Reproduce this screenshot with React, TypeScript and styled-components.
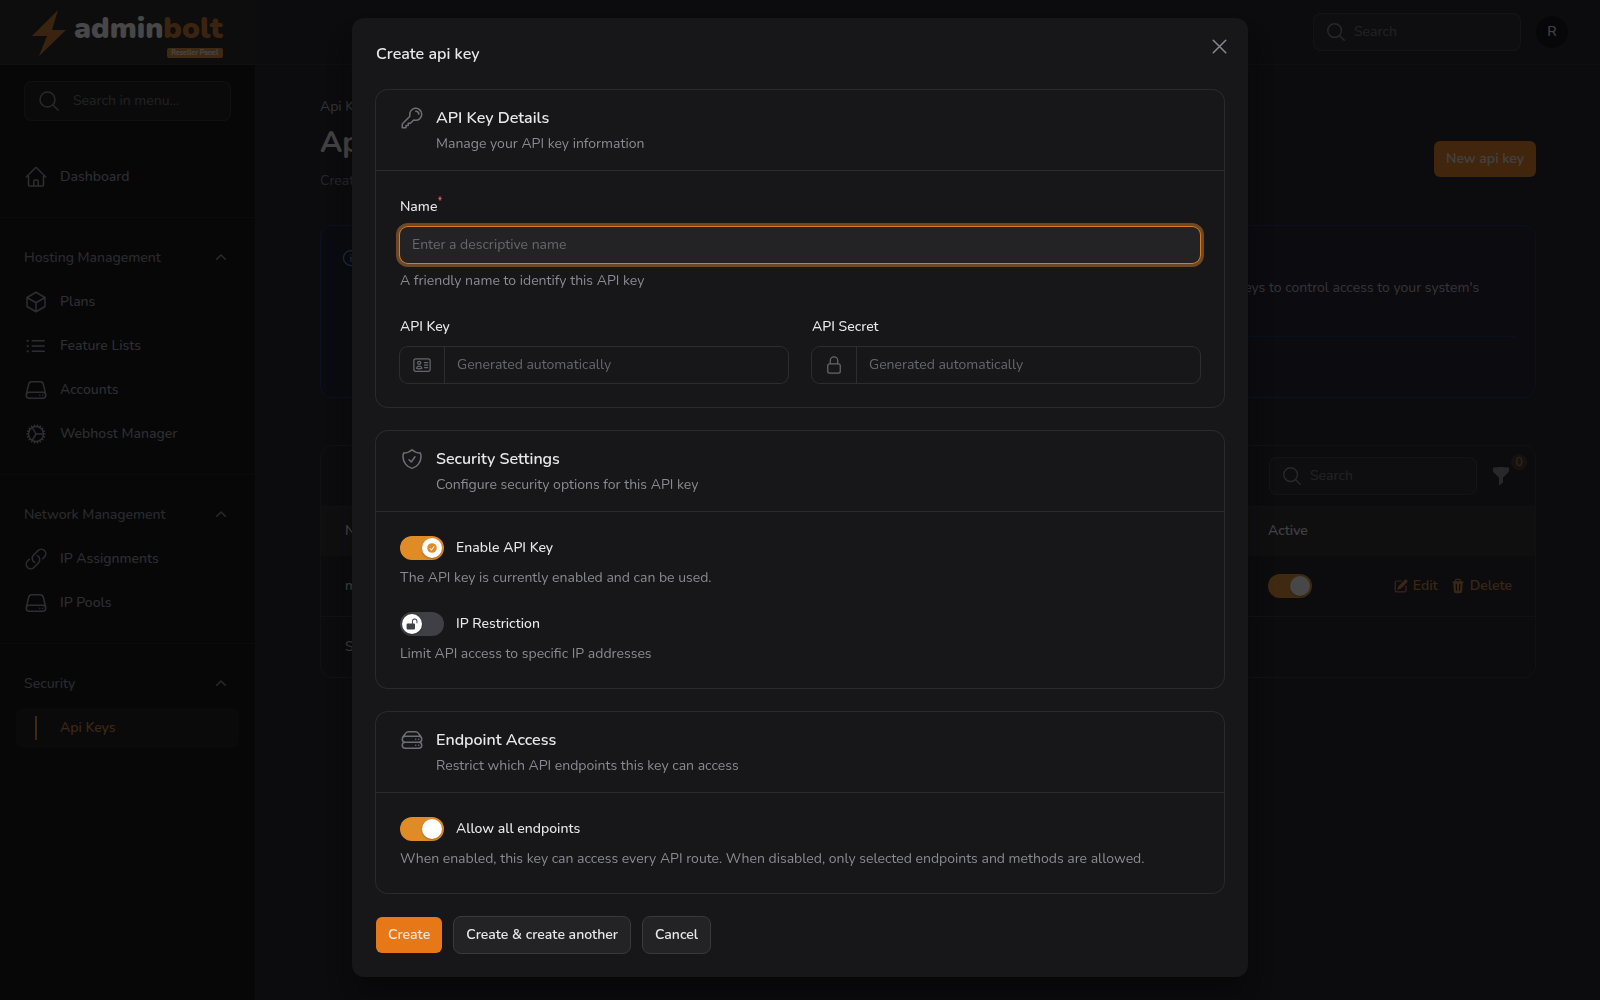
import React from "react";
import styled, { createGlobalStyle, css } from "styled-components";
import type { IconType } from "react-icons";
import {
  HiMiniCheckCircle,
  HiMiniChevronUp,
  HiMiniFunnel,
  HiMiniLockOpen,
  HiMiniPencilSquare,
  HiMiniTrash,
  HiOutlineCog,
  HiOutlineCube,
  HiOutlineHome,
  HiOutlineIdentification,
  HiOutlineInformationCircle,
  HiOutlineKey,
  HiOutlineLink,
  HiOutlineListBullet,
  HiOutlineLockClosed,
  HiOutlineMagnifyingGlass,
  HiOutlineServer,
  HiOutlineServerStack,
  HiOutlineShieldCheck,
  HiOutlineXMark,
} from "react-icons/hi2";

const line = "rgba(255, 255, 255, 0.1)";
const faintLine = "rgba(255, 255, 255, 0.06)";
const orange = "#e67817";
const amber = "#df8c27";
const bright = "#e8e8ea";

const GlobalStyle = createGlobalStyle`
  *, *::before, *::after { box-sizing: border-box; }
  body {
    margin: 0;
    background: #141419;
    color: ${bright};
    font-family: Nunito, Lato, sans-serif;
    font-size: 14px;
    line-height: 20px;
    -webkit-font-smoothing: antialiased;
  }
  h1, h2, h3, p, ul { margin: 0; padding: 0; }
  ul { list-style: none; }
  button, input { font: inherit; color: inherit; }
  a { text-decoration: none; }
  svg { flex: none; display: block; }
`;

/* ---------- shell ---------- */

const Shell = styled.div`
  display: grid;
  grid-template-columns: 256px 1fr;
  min-height: 100vh;
`;

const Sidebar = styled.aside`
  background: #020203;
  border-right: 1px solid ${line};
`;

const Brand = styled.a`
  display: flex;
  align-items: flex-start;
  gap: 7px;
  height: 65px;
  padding: 10px 31px 0;
  background: #1a1a1a;
  border-bottom: 1px solid ${faintLine};
  color: #fff;
`;

const BrandText = styled.span`
  display: flex;
  flex-direction: column;
  align-items: flex-end;
`;

const Wordmark = styled.span`
  font-size: 30px;
  font-weight: 900;
  line-height: 38px;
  em {
    font-style: normal;
    color: #c9761e;
  }
`;

const PanelTag = styled.span`
  width: 56px;
  border-radius: 2px;
  background: #d98632;
  color: #fff;
  font-size: 7px;
  font-weight: 700;
  line-height: 10px;
  text-align: center;
`;

const SearchBox = styled.label<{ $wide?: boolean }>`
  display: flex;
  align-items: center;
  gap: ${(p) => (p.$wide ? 12 : 7)}px;
  width: ${(p) => (p.$wide ? "auto" : "208px")};
  height: ${(p) => (p.$wide ? 40 : 38)}px;
  padding: 0 ${(p) => (p.$wide ? 12 : 11)}px;
  border: 1px solid ${line};
  border-radius: 8px;
  background: rgba(255, 255, 255, 0.05);
  color: #85858f;
  input {
    flex: 1;
    min-width: 0;
    padding: 0;
    border: 0;
    outline: 0;
    background: none;
    &::placeholder {
      color: #6b6b75;
      opacity: 1;
    }
  }
`;

const SidebarSearch = styled.div`
  padding: 16px 24px 36px;
`;

const NavGroup = styled.section`
  padding-bottom: 20px;
  & + & {
    padding-top: 20px;
    border-top: 1px solid ${faintLine};
  }
`;

const GroupToggle = styled.button`
  display: flex;
  align-items: center;
  justify-content: space-between;
  width: 100%;
  height: 40px;
  padding: 0 24px;
  border: 0;
  background: none;
  color: #8d8d97;
  font-weight: 500;
`;

const NavList = styled.ul`
  display: grid;
  gap: 4px;
  padding: 0 16px;
  ${GroupToggle} + & {
    margin-top: 4px;
  }
`;

const NavLink = styled.a<{ $active?: boolean }>`
  display: flex;
  align-items: center;
  gap: 12px;
  height: 40px;
  padding: 0 8px;
  border-radius: 8px;
  background: ${(p) => (p.$active ? "rgba(255,255,255,0.05)" : "none")};
  color: ${(p) => (p.$active ? "#d98632" : "#9a9aa4")};
  font-weight: 500;
`;

const ActiveMark = styled.span`
  width: 2px;
  height: 24px;
  margin: 0 11px;
  background: currentColor;
`;

/* ---------- page behind the dialog ---------- */

const Topbar = styled.header`
  display: flex;
  align-items: center;
  justify-content: flex-end;
  gap: 15px;
  height: 65px;
  padding: 0 32px;
  border-bottom: 1px solid ${faintLine};
`;

const Avatar = styled.button`
  width: 32px;
  height: 32px;
  padding: 0;
  border: 0;
  border-radius: 50%;
  background: #030305;
  font-weight: 500;
`;

const Page = styled.main`
  padding: 32px 64px;
`;

const PageHeader = styled.div`
  display: flex;
  align-items: center;
  justify-content: space-between;
  margin-bottom: 32px;
`;

const Crumb = styled.nav`
  margin-bottom: 8px;
  color: #b5b5bd;
  a {
    color: inherit;
  }
`;

const PageTitle = styled.h1`
  font-size: 30px;
  font-weight: 700;
  line-height: 36px;
`;

const PageLead = styled.p`
  margin-top: 8px;
  color: #7c7c86;
  line-height: 24px;
`;

const Button = styled.button<{ $primary?: boolean }>`
  height: ${(p) => (p.$primary ? 36 : 38)}px;
  padding: 0 12px;
  border-radius: 6px;
  font-weight: 600;
  ${(p) =>
    p.$primary
      ? css`
          border: 0;
          background: ${orange};
        `
      : css`
          border: 1px solid #3a3a3d;
          background: #232325;
          border-radius: 8px;
        `}
`;

const HeaderAction = styled.div`
  margin-top: 28px;
`;

const Notice = styled.section`
  display: flex;
  gap: 12px;
  padding: 20px;
  border: 1px solid #182468;
  border-radius: 12px;
  background: linear-gradient(90deg, #0c1220, #17111e);
`;

const NoticeIcon = styled.span`
  display: flex;
  height: 24px;
  align-items: center;
  color: #4b95e6;
`;

const NoticeBody = styled.div`
  flex: 1;
`;

const NoticeTitle = styled.h2`
  font-size: 16px;
  line-height: 24px;
`;

const NoticeText = styled.p`
  margin-top: 8px;
  padding-right: 32px;
  min-height: 40px;
  color: #b5b5bd;
`;

const NoticeLinks = styled.div`
  margin-top: 18px;
  padding-top: 16px;
  border-top: 1px solid #13205a;
  line-height: 24px;
  a {
    color: #3b82d6;
  }
`;

const TableCard = styled.section`
  margin-top: 47px;
  border: 1px solid ${line};
  border-radius: 12px;
  overflow: hidden;
`;

const Toolbar = styled.div`
  display: flex;
  align-items: center;
  justify-content: flex-end;
  gap: 12px;
  height: 60px;
  padding: 0 22px 0 24px;
`;

const FilterButton = styled.button`
  position: relative;
  display: grid;
  place-items: center;
  width: 24px;
  height: 36px;
  padding: 0;
  border: 0;
  background: none;
  color: #84848d;
`;

const FilterCount = styled.span`
  position: absolute;
  top: -4px;
  right: -14px;
  width: 16px;
  height: 16px;
  border-radius: 50%;
  background: #3c2c1a;
  color: #c09038;
  font-size: 12px;
  line-height: 16px;
`;

const Table = styled.table`
  width: 100%;
  border-collapse: collapse;
  table-layout: fixed;
  th {
    height: 49px;
    background: #212123;
    border-top: 1px solid ${line};
    font-weight: 500;
    text-align: left;
  }
  td {
    height: 61px;
    border-bottom: 1px solid ${line};
  }
  th,
  td {
    padding: 0 12px;
  }
  th:first-child,
  td:first-child {
    padding-left: 24px;
  }
  th:nth-child(4) {
    width: 126px;
  }
  th:last-child {
    width: 153px;
  }
`;

const RowActions = styled.div`
  display: flex;
  justify-content: flex-end;
  gap: 12px;
  margin-right: 11px;
`;

const RowAction = styled.button`
  display: flex;
  align-items: center;
  gap: 4px;
  padding: 0;
  border: 0;
  background: none;
  color: #c87d35;
  font-weight: 600;
`;

const TableFooter = styled.p`
  padding: 20px 24px;
  color: #c8c8ce;
  font-weight: 500;
`;

/* ---------- switch ---------- */

const SwitchTrack = styled.span`
  display: inline-grid;
  flex: none;
  width: 44px;
  height: 24px;
  vertical-align: middle;
  > * {
    grid-area: 1 / 1;
  }
`;

const SwitchInput = styled.input`
  appearance: none;
  width: 44px;
  height: 24px;
  margin: 0;
  border-radius: 12px;
  background: #3f3f46;
  &:checked {
    background: ${amber};
  }
`;

const Thumb = styled.span<{ $on: boolean }>`
  display: grid;
  place-items: center;
  align-self: center;
  justify-self: ${(p) => (p.$on ? "end" : "start")};
  width: 20px;
  height: 20px;
  margin: 0 2px;
  border-radius: 50%;
  background: #fff;
  box-shadow: 0 1px 2px rgba(0, 0, 0, 0.25);
  color: ${(p) => (p.$on ? amber : "#3f3f46")};
  pointer-events: none;
`;

type SwitchProps = { on: boolean; icon?: IconType; id?: string; label?: string };

function Switch({ on, icon: Icon, id, label }: SwitchProps) {
  const [checked, setChecked] = React.useState(on);
  return (
    <SwitchTrack>
      <SwitchInput
        type="checkbox"
        role="switch"
        id={id}
        aria-label={label}
        checked={checked}
        onChange={() => setChecked(!checked)}
      />
      <Thumb $on={checked}>{Icon && <Icon size={12} />}</Thumb>
    </SwitchTrack>
  );
}

/* ---------- dialog ---------- */

const Overlay = styled.div`
  position: fixed;
  inset: 0;
  padding: 18px 16px;
  overflow: auto;
  background: rgba(9, 9, 11, 0.75);
`;

const Dialog = styled.form`
  position: relative;
  display: grid;
  gap: 24px;
  max-width: 896px;
  margin: 0 auto;
  padding: 24px;
  border-radius: 12px;
  background: #171719;
  box-shadow: 0 20px 25px rgba(0, 0, 0, 0.3);
`;

const DialogTitle = styled.h2`
  font-size: 16px;
  font-weight: 600;
  line-height: 24px;
`;

const CloseButton = styled.button`
  position: absolute;
  top: 16px;
  right: 16px;
  padding: 0;
  border: 0;
  background: none;
  color: #85858f;
`;

const Section = styled.section`
  border-radius: 12px;
  box-shadow: 0 0 0 1px #2a2a2d;
`;

const SectionHeader = styled.header`
  display: flex;
  gap: 12px;
  padding: 16px 24px;
  color: #6e6e77;
`;

const SectionTitle = styled.h3`
  color: ${bright};
  font-size: 16px;
  font-weight: 600;
  line-height: 24px;
`;

const Hint = styled.p`
  color: #8a8a93;
`;

const SectionHint = styled(Hint)`
  margin-top: 4px;
`;

const SectionBody = styled.div`
  display: grid;
  gap: 24px;
  padding: 24px;
  border-top: 1px solid #2a2a2d;
`;

const Field = styled.div`
  display: grid;
  gap: 8px;
`;

const FieldLabel = styled.label`
  font-weight: 500;
  line-height: 24px;
  sup {
    color: #f26464;
    font-size: 11px;
    line-height: 0;
  }
`;

const InputShell = styled.div<{ $focused?: boolean }>`
  display: flex;
  height: 36px;
  border-radius: 8px;
  box-shadow: ${(p) =>
    p.$focused ? "0 0 0 1px #d67a20, 0 0 0 4px #6d4822" : "0 0 0 1px #2d2d30"};
  background: ${(p) => (p.$focused ? "#232325" : "none")};
  input {
    flex: 1;
    min-width: 0;
    padding: 0 12px;
    border: 0;
    outline: 0;
    background: none;
    &::placeholder {
      color: #66666f;
      opacity: 1;
    }
  }
`;

const Affix = styled.span`
  display: grid;
  place-items: center;
  width: 45px;
  border-right: 1px solid #2d2d30;
  color: #66666f;
`;

const TwoColumns = styled.div`
  display: grid;
  grid-template-columns: 1fr 1fr;
  gap: 24px;
`;

const SwitchRow = styled.div`
  display: flex;
  align-items: center;
  gap: 12px;
  height: 24px;
`;

const SwitchLabel = styled.label`
  font-weight: 500;
`;

const DialogFooter = styled.footer`
  display: flex;
  align-items: center;
  gap: 11px;
  margin: -1px 0;
`;

/* ---------- composed parts ---------- */

type NavItem = { label: string; icon?: IconType; active?: boolean };

const groups: { title?: string; items: NavItem[] }[] = [
  { items: [{ label: "Dashboard", icon: HiOutlineHome }] },
  {
    title: "Hosting Management",
    items: [
      { label: "Plans", icon: HiOutlineCube },
      { label: "Feature Lists", icon: HiOutlineListBullet },
      { label: "Accounts", icon: HiOutlineServer },
      { label: "Webhost Manager", icon: HiOutlineCog },
    ],
  },
  {
    title: "Network Management",
    items: [
      { label: "IP Assignments", icon: HiOutlineLink },
      { label: "IP Pools", icon: HiOutlineServer },
    ],
  },
  { title: "Security", items: [{ label: "Api Keys", active: true }] },
];

function PanelSection(props: {
  icon: IconType;
  title: string;
  hint: string;
  children: React.ReactNode;
}) {
  const Icon = props.icon;
  return (
    <Section>
      <SectionHeader>
        <Icon size={24} />
        <div>
          <SectionTitle>{props.title}</SectionTitle>
          <SectionHint>{props.hint}</SectionHint>
        </div>
      </SectionHeader>
      <SectionBody>{props.children}</SectionBody>
    </Section>
  );
}

function GeneratedField(props: { id: string; label: string; icon: IconType }) {
  const Icon = props.icon;
  return (
    <Field>
      <FieldLabel htmlFor={props.id}>{props.label}</FieldLabel>
      <InputShell>
        <Affix>
          <Icon size={20} />
        </Affix>
        <input id={props.id} placeholder="Generated automatically" readOnly />
      </InputShell>
    </Field>
  );
}

function ToggleField(props: {
  id: string;
  label: string;
  hint: string;
  on: boolean;
  icon?: IconType;
}) {
  return (
    <Field>
      <SwitchRow>
        <Switch id={props.id} on={props.on} icon={props.icon} />
        <SwitchLabel htmlFor={props.id}>{props.label}</SwitchLabel>
      </SwitchRow>
      <Hint>{props.hint}</Hint>
    </Field>
  );
}

function Search({ label }: { label: string }) {
  return (
    <SearchBox>
      <HiOutlineMagnifyingGlass size={22} />
      <input placeholder="Search" aria-label={label} />
    </SearchBox>
  );
}

export default function App() {
  return (
    <>
      <GlobalStyle />
      <Shell>
        <Sidebar>
          <Brand href="#">
            <svg width="36" height="48" viewBox="0 0 36 48">
              <path d="M27 0 1 26h15L8 46l27-26H21z" fill="#c9761e" />
            </svg>
            <BrandText>
              <Wordmark>
                admin<em>bolt</em>
              </Wordmark>
              <PanelTag>Reseller Panel</PanelTag>
            </BrandText>
          </Brand>
          <SidebarSearch>
            <SearchBox $wide>
              <HiOutlineMagnifyingGlass size={24} />
              <input placeholder="Search in menu..." aria-label="Search in menu" />
            </SearchBox>
          </SidebarSearch>
          {groups.map((group) => (
            <NavGroup key={group.title ?? "home"}>
              {group.title && (
                <GroupToggle type="button">
                  {group.title}
                  <HiMiniChevronUp size={20} />
                </GroupToggle>
              )}
              <NavList>
                {group.items.map(({ label, icon: Icon, active }) => (
                  <li key={label}>
                    <NavLink href="#" $active={active}>
                      {Icon ? <Icon size={24} /> : <ActiveMark />}
                      {label}
                    </NavLink>
                  </li>
                ))}
              </NavList>
            </NavGroup>
          ))}
        </Sidebar>

        <div>
          <Topbar>
            <Search label="Global search" />
            <Avatar type="button">R</Avatar>
          </Topbar>
          <Page>
            <PageHeader>
              <div>
                <Crumb>
                  <a href="#">Api Keys</a>
                </Crumb>
                <PageTitle>Api Keys</PageTitle>
                <PageLead>Create and manage API keys</PageLead>
              </div>
              <HeaderAction>
                <Button $primary>New api key</Button>
              </HeaderAction>
            </PageHeader>

            <Notice>
              <NoticeIcon>
                <HiOutlineInformationCircle size={20} />
              </NoticeIcon>
              <NoticeBody>
                <NoticeTitle>API Information</NoticeTitle>
                <NoticeText>
                  API keys allow external applications to authenticate and interact with your
                  system through the API endpoints. Generate and manage your keys to
                  control access to your system's resources.
                </NoticeText>
                <NoticeLinks>
                  <a href="#">API Documentation</a>
                </NoticeLinks>
              </NoticeBody>
            </Notice>

            <TableCard>
              <Toolbar>
                <Search label="Search keys" />
                <FilterButton type="button" aria-label="Filter">
                  <HiMiniFunnel size={20} />
                  <FilterCount>0</FilterCount>
                </FilterButton>
              </Toolbar>
              <Table>
                <thead>
                  <tr>
                    <th>Name</th>
                    <th>API Key</th>
                    <th>Last used</th>
                    <th>Active</th>
                    <th aria-label="Actions" />
                  </tr>
                </thead>
                <tbody>
                  <tr>
                    <td>main</td>
                    <td />
                    <td />
                    <td>
                      <Switch on label="Active" />
                    </td>
                    <td>
                      <RowActions>
                        <RowAction type="button">
                          <HiMiniPencilSquare size={16} />
                          Edit
                        </RowAction>
                        <RowAction type="button">
                          <HiMiniTrash size={16} />
                          Delete
                        </RowAction>
                      </RowActions>
                    </td>
                  </tr>
                </tbody>
              </Table>
              <TableFooter>Showing 1 result</TableFooter>
            </TableCard>
          </Page>
        </div>
      </Shell>

      <Overlay>
        <Dialog role="dialog" aria-modal="true" aria-labelledby="dialog-title">
          <DialogTitle id="dialog-title">Create api key</DialogTitle>
          <CloseButton type="button" aria-label="Close">
            <HiOutlineXMark size={25} />
          </CloseButton>

          <PanelSection
            icon={HiOutlineKey}
            title="API Key Details"
            hint="Manage your API key information"
          >
            <Field>
              <FieldLabel htmlFor="name">
                Name<sup>*</sup>
              </FieldLabel>
              <InputShell $focused>
                <input id="name" placeholder="Enter a descriptive name" required />
              </InputShell>
              <Hint>A friendly name to identify this API key</Hint>
            </Field>
            <TwoColumns>
              <GeneratedField id="key" label="API Key" icon={HiOutlineIdentification} />
              <GeneratedField id="secret" label="API Secret" icon={HiOutlineLockClosed} />
            </TwoColumns>
          </PanelSection>

          <PanelSection
            icon={HiOutlineShieldCheck}
            title="Security Settings"
            hint="Configure security options for this API key"
          >
            <ToggleField
              id="enabled"
              label="Enable API Key"
              hint="The API key is currently enabled and can be used."
              on
              icon={HiMiniCheckCircle}
            />
            <ToggleField
              id="restrict"
              label="IP Restriction"
              hint="Limit API access to specific IP addresses"
              on={false}
              icon={HiMiniLockOpen}
            />
          </PanelSection>

          <PanelSection
            icon={HiOutlineServerStack}
            title="Endpoint Access"
            hint="Restrict which API endpoints this key can access"
          >
            <ToggleField
              id="endpoints"
              label="Allow all endpoints"
              hint="When enabled, this key can access every API route. When disabled, only selected endpoints and methods are allowed."
              on
            />
          </PanelSection>

          <DialogFooter>
            <Button type="submit" $primary>
              Create
            </Button>
            <Button type="button">Create &amp; create another</Button>
            <Button type="button">Cancel</Button>
          </DialogFooter>
        </Dialog>
      </Overlay>
    </>
  );
}
